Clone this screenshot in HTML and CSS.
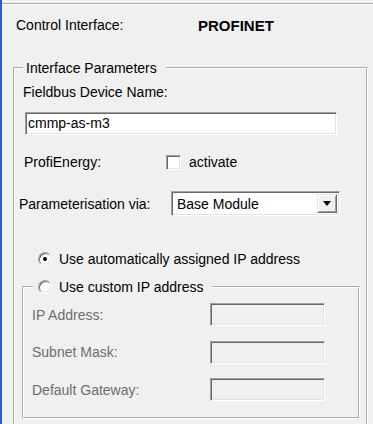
FILE: index.html
```html
<!DOCTYPE html>
<html lang="en">
  <head>
    <meta charset="UTF-8" />
    <meta name="viewport" content="width=device-width, initial-scale=1.0" />
    <title>Interface Parameters</title>
    <link rel="stylesheet" href="styles.css">
  </head>
  <body>
    <div class="separator"></div>
    <div class="header">
      <span class="header-label">Control Interface:</span>
      <span class="header-value">PROFINET</span>
    </div>
    <fieldset class="group outer">
      <legend>Interface Parameters</legend>
      <div class="field-label">Fieldbus Device Name:</div>
      <div class="textbox name-box">cmmp-as-m3</div>
      <div class="row energy-row">
        <span class="energy-label">ProfiEnergy:</span>
        <span class="check"></span>
        <span>activate</span>
      </div>
      <div class="row param-row">
        <span class="param-label">Parameterisation via:</span>
        <div class="combo">
          <span class="combo-text">Base Module</span>
          <span class="combo-btn"><span class="arrow"></span></span>
        </div>
      </div>
      <div class="row radio-row">
        <span class="radio"><span class="dot"></span></span>
        <span>Use automatically assigned IP address</span>
      </div>
      <fieldset class="group inner">
        <legend>
          <span class="legend-row">
            <span class="radio"></span>
            <span>Use custom IP address</span>
          </span>
        </legend>
        <div class="row ip-row">
          <span class="ip-label">IP Address:</span>
          <span class="textbox ip-box"></span>
        </div>
        <div class="row ip-row">
          <span class="ip-label">Subnet Mask:</span>
          <span class="textbox ip-box"></span>
        </div>
        <div class="row ip-row">
          <span class="ip-label">Default Gateway:</span>
          <span class="textbox ip-box"></span>
        </div>
      </fieldset>
    </fieldset>
  </body>
</html>
```

FILE: styles.css
```css
body {
  margin: 0;
  height: 424px;
  overflow: hidden;
  background: #f0f0f0;
  border-left: 2px solid #2a5bc8;
  font-family: "Liberation Sans", Arial, sans-serif;
  font-size: 14px;
  color: #000;
}
.separator {
  height: 0;
  margin-top: 3px;
  border-top: 2px groove #fff;
}
.header {
  display: flex;
  height: 56px;
  box-sizing: border-box;
  padding: 12px 0 0 14px;
  line-height: 17px;
}
.header-label {
  width: 182px;
}
.header-value {
  font-size: 15px;
  font-weight: bold;
}
.group {
  border: 2px groove #fff;
  margin: 0;
  min-width: 0;
}
.outer {
  margin: 0 5px 0 11px;
  padding: 9px 6px 10px 0;
}
.outer > legend {
  margin-left: 8px;
  padding: 0 9px 0 3px;
  line-height: 14px;
}
.field-label {
  margin-left: 8px;
  line-height: 16px;
}
.textbox {
  display: block;
  box-sizing: border-box;
  height: 23px;
  border: 1px solid;
  border-color: #a0a0a0 #fff #fff #a0a0a0;
  box-shadow: inset 1px 1px 0 #696969, inset -1px -1px 0 #e3e3e3;
  background: #fff;
}
.name-box {
  width: 312px;
  margin: 12px 0 0 10px;
  padding-left: 2px;
  line-height: 21px;
}
.row {
  display: flex;
  align-items: center;
}
.energy-row {
  height: 20px;
  margin: 17px 0 0 9px;
}
.energy-label {
  width: 142px;
}
.check {
  width: 15px;
  height: 15px;
  box-sizing: border-box;
  margin-right: 8px;
  border: 1px solid;
  border-color: #a0a0a0 #fff #fff #a0a0a0;
  box-shadow: inset 1px 1px 0 #696969, inset -1px -1px 0 #e3e3e3;
  background: #fff;
}
.param-row {
  height: 25px;
  margin: 19px 0 0 4px;
}
.param-label {
  width: 152px;
}
.combo {
  display: flex;
  align-items: center;
  width: 169px;
  height: 25px;
  box-sizing: border-box;
  padding: 2px;
  border: 1px solid;
  border-color: #a0a0a0 #fff #fff #a0a0a0;
  box-shadow: inset 1px 1px 0 #696969, inset -1px -1px 0 #e3e3e3;
  background: #fff;
}
.combo-text {
  flex: 1;
  padding-left: 3px;
}
.combo-btn {
  display: flex;
  align-items: center;
  justify-content: center;
  width: 20px;
  align-self: stretch;
  box-sizing: border-box;
  background: #f0f0f0;
  border: 1px solid;
  border-color: #e3e3e3 #696969 #696969 #e3e3e3;
  box-shadow: inset 1px 1px 0 #fff, inset -1px -1px 0 #a0a0a0;
}
.arrow {
  width: 8px;
  height: 5px;
  background: #000;
  clip-path: polygon(0 0, 100% 0, 50% 100%);
}
.radio-row {
  height: 16px;
  margin: 35px 0 0 23px;
  gap: 7px;
}
.radio {
  display: flex;
  align-items: center;
  justify-content: center;
  width: 14px;
  height: 14px;
  box-sizing: border-box;
  border-radius: 50%;
  border: 1px solid;
  border-color: #a0a0a0 #fff #fff #a0a0a0;
  box-shadow: inset 1px 1px 0 #696969, inset -1px -1px 0 #e3e3e3;
  background: #fff;
}
.dot {
  width: 4px;
  height: 4px;
  border-radius: 50%;
  background: #000;
}
.inner {
  margin: 12px 0 0 7px;
  padding: 8px 0 16px 0;
}
.inner > legend {
  margin-left: 9px;
  padding: 0 9px 0 5px;
  line-height: 16px;
}
.legend-row {
  display: flex;
  align-items: center;
  gap: 7px;
  height: 16px;
}
.ip-row {
  height: 23px;
  margin-left: 8px;
  color: #6d6d6d;
}
.ip-row + .ip-row {
  margin-top: 14.5px;
}
.ip-label {
  width: 178px;
}
.ip-box {
  width: 115px;
  background: #f0f0f0;
}
```
